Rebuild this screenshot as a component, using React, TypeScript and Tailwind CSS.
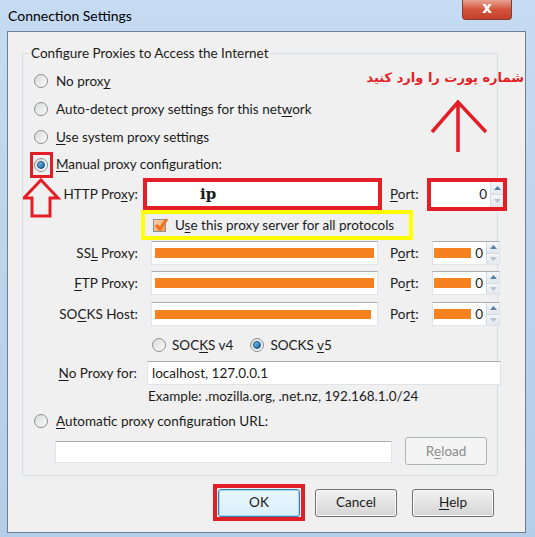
import React from "react"

function U({ children }: { children: React.ReactNode }) {
  return <span className="underline underline-offset-2">{children}</span>
}

function Radio({ checked = false }: { checked?: boolean }) {
  return (
    <span className="flex h-[14px] w-[14px] shrink-0 items-center justify-center rounded-full border border-[#8e8f8f] bg-gradient-to-br from-[#d9dadb] to-[#fbfbfb]">
      {checked && (
        <span className="h-[8px] w-[8px] rounded-full border border-[#0e4d80] bg-gradient-to-br from-[#7ec6f0] to-[#1a5e96]" />
      )}
    </span>
  )
}

function Spinner() {
  return (
    <div className="flex h-full w-[13px] shrink-0 flex-col border-l border-[#d6dbe2]">
      <div className="flex flex-1 items-center justify-center border-b border-[#d6dbe2] bg-gradient-to-b from-[#f4f6f8] to-[#e3e8ee]">
        <svg width="7" height="4" viewBox="0 0 7 4">
          <path d="M0 4 L3.5 0 L7 4 Z" fill="#5a7fa6" />
        </svg>
      </div>
      <div className="flex flex-1 items-center justify-center bg-gradient-to-b from-[#f4f6f8] to-[#e3e8ee]">
        <svg width="7" height="4" viewBox="0 0 7 4">
          <path d="M0 0 L3.5 4 L7 0 Z" fill="#b9c3ce" />
        </svg>
      </div>
    </div>
  )
}

function TextBox({ className = "", children }: { className?: string; children?: React.ReactNode }) {
  return (
    <div
      className={
        "flex shrink-0 items-center border border-[#e2e3ea] border-t-[#abadb3] bg-white " + className
      }
    >
      {children}
    </div>
  )
}

function PortBox() {
  return (
    <TextBox className="h-[24px] w-[68px]">
      <div className="flex flex-1 items-center justify-end pr-[3px]">
        <span className="mr-[4px] h-[10px] w-[37px] bg-[#f5821f]" />
        <span>0</span>
      </div>
      <Spinner />
    </TextBox>
  )
}

function Btn({ children, focused = false, disabled = false }: { children: React.ReactNode; focused?: boolean; disabled?: boolean }) {
  return (
    <div
      className={
        "flex h-[28px] w-[82px] shrink-0 items-center justify-center rounded-[3px] border " +
        (focused
          ? "border-[#3c7fb1] bg-gradient-to-b from-[#eaf6fd] to-[#d9f0fc] shadow-[inset_0_0_0_1px_#9fdcf8]"
          : disabled
          ? "border-[#adb2b5] bg-[#f4f4f4] text-[#8d8d8d]"
          : "border-[#707070] bg-gradient-to-b from-[#f2f2f2] to-[#d5d5d5] shadow-[inset_0_0_0_1px_#fcfcfc]")
      }
    >
      {children}
    </div>
  )
}

export default function App() {
  return (
    <div className="flex h-[537px] w-[535px] flex-col overflow-hidden bg-gradient-to-b from-[#c5dbf1] to-[#b4cde8] font-['Segoe_UI',Lato,sans-serif] text-[13.5px] text-[#1b1b1b]">
      {/* title bar */}
      <div className="flex h-[31px] shrink-0 items-start">
        <span className="pl-[8px] pt-[5px] text-[14px] text-black">Connection Settings</span>
        <div className="ml-auto mr-[23px] flex h-[20px] w-[50px] items-center justify-center rounded-b-[4px] border border-t-0 border-[#8b3a2e] bg-gradient-to-b from-[#e8a190] via-[#d2533b] to-[#c4402a]">
          <span className="pb-[2px] font-['DejaVu_Sans',sans-serif] text-[15px] font-bold leading-none text-white">x</span>
        </div>
      </div>

      <div className="flex flex-1 pb-[4px] pl-[7px] pr-[9px]">
        <div className="relative flex flex-1 flex-col border border-[#6d7f91] bg-[#f0f0f0]">
          {/* group box */}
          <div className="relative ml-[14px] mt-[21px] flex h-[423px] w-[476px] flex-col rounded-[3px] border border-[#d5dfe5] pt-[13px]">
            <span className="absolute -top-[10px] left-[6px] bg-[#f0f0f0] px-[2px] leading-[18px]">
              Configure Proxies to Access the Internet
            </span>

            <div className="flex h-[28px] items-center gap-[8px] pl-[11px]">
              <Radio />
              <span>
                No prox<U>y</U>
              </span>
            </div>
            <div className="flex h-[28px] items-center gap-[8px] pl-[11px]">
              <Radio />
              <span>
                Auto-detect proxy settings for this net<U>w</U>ork
              </span>
            </div>
            <div className="flex h-[28px] items-center gap-[8px] pl-[11px]">
              <Radio />
              <span>
                <U>U</U>se system proxy settings
              </span>
            </div>
            <div className="flex h-[27px] items-center gap-[8px] pl-[11px]">
              <Radio checked />
              <span>
                <U>M</U>anual proxy configuration:
              </span>
            </div>

            {/* HTTP */}
            <div className="flex h-[32px] items-center">
              <span className="w-[115px] shrink-0 text-right">
                HTTP Pro<U>x</U>y:
              </span>
              <div className="ml-[5px] flex h-[32px] w-[239px] shrink-0 items-center border-[4px] border-[#e41e26] bg-white pl-[53px]">
                <span className="font-['DejaVu_Serif',serif] text-[15px] font-bold">ip</span>
              </div>
              <span className="ml-[8px] w-[37px] shrink-0">
                <U>P</U>ort:
              </span>
              <div className="flex h-[33px] w-[80px] shrink-0 items-center border-[4px] border-[#e41e26] bg-white">
                <div className="flex h-full flex-1 items-center justify-end pr-[3px]">0</div>
                <Spinner />
              </div>
            </div>

            {/* checkbox */}
            <div className="flex h-[30px]">
              <div className="ml-[118px] flex h-[30px] w-[272px] shrink-0 items-center border-[4px] border-[#ffff00] pl-[8px]">
                <span className="relative flex h-[13px] w-[13px] shrink-0 items-center justify-center border border-[#8e8f8f] bg-gradient-to-br from-[#f6d2b4] to-[#f29a4e]">
                  <svg width="15" height="13" viewBox="0 0 15 13" className="absolute -top-[2px] left-0">
                    <path d="M2 7 L6 11 L13 1" fill="none" stroke="#f0701c" strokeWidth="3" />
                  </svg>
                </span>
                <span className="ml-[9px] whitespace-nowrap">
                  U<U>s</U>e this proxy server for all protocols
                </span>
              </div>
            </div>

            {/* SSL */}
            <div className="mt-[1px] flex h-[24px] items-center">
              <span className="w-[115px] shrink-0 text-right">
                SS<U>L</U> Proxy:
              </span>
              <TextBox className="ml-[13px] h-[24px] w-[227px] px-[3px]">
                <span className="h-[10px] w-full bg-[#f5821f]" />
              </TextBox>
              <span className="ml-[12px] w-[42px] shrink-0">
                P<U>o</U>rt:
              </span>
              <PortBox />
            </div>
            {/* FTP */}
            <div className="mt-[6px] flex h-[24px] items-center">
              <span className="w-[115px] shrink-0 text-right">
                <U>F</U>TP Proxy:
              </span>
              <TextBox className="ml-[13px] h-[24px] w-[227px] px-[3px]">
                <span className="h-[10px] w-full bg-[#f5821f]" />
              </TextBox>
              <span className="ml-[12px] w-[42px] shrink-0">
                Po<U>r</U>t:
              </span>
              <PortBox />
            </div>
            {/* SOCKS */}
            <div className="mt-[7px] flex h-[24px] items-center">
              <span className="w-[115px] shrink-0 text-right">
                SO<U>C</U>KS Host:
              </span>
              <TextBox className="ml-[13px] h-[24px] w-[227px] px-[3px]">
                <span className="h-[9px] w-[216px] bg-[#f5821f]" />
              </TextBox>
              <span className="ml-[12px] w-[42px] shrink-0">
                Por<U>t</U>:
              </span>
              <PortBox />
            </div>

            {/* socks version */}
            <div className="mt-[8px] flex h-[22px] items-center pl-[129px]">
              <Radio />
              <span className="ml-[6px]">
                SOC<U>K</U>S v4
              </span>
              <span className="ml-[17px]">
                <Radio checked />
              </span>
              <span className="ml-[6px]">
                SOCKS <U>v</U>5
              </span>
            </div>

            {/* no proxy for */}
            <div className="mt-[5px] flex h-[24px] items-center">
              <span className="w-[114px] shrink-0 text-right">
                <U>N</U>o Proxy for:
              </span>
              <TextBox className="ml-[10px] h-[24px] w-[354px] px-[4px]">localhost, 127.0.0.1</TextBox>
            </div>
            <div className="mt-[1px] flex h-[20px] items-center pl-[125px]">
              Example: .mozilla.org, .net.nz, 192.168.1.0/24
            </div>

            <div className="mt-[4px] flex h-[22px] items-center gap-[8px] pl-[11px]">
              <Radio />
              <span>
                <U>A</U>utomatic proxy configuration URL:
              </span>
            </div>
            <div className="mt-[5px] flex h-[27px] items-start pl-[32px]">
              <TextBox className="mt-[4px] h-[22px] w-[337px]" />
              <div className="ml-[13px]">
                <Btn disabled>
                  R<U>e</U>load
                </Btn>
              </div>
            </div>

            {/* annotations */}
            <span
              dir="rtl"
              className="absolute -right-[27px] top-[14px] whitespace-nowrap font-['DejaVu_Sans',sans-serif] text-[13px] font-bold text-[#e41e26]"
            >
              شماره پورت را وارد کنید
            </span>
            <svg className="absolute left-[405px] top-[44px]" width="64" height="56" viewBox="0 0 64 56">
              <path d="M4 34 L30 4 L58 34 M30 4 L30 54" fill="none" stroke="#e41e26" strokeWidth="3.5" />
            </svg>
            <div className="absolute left-[7px] top-[98px] h-[26px] w-[23px] border-[3px] border-[#e41e26]" />
            <svg className="absolute left-0 top-[124px]" width="38" height="40" viewBox="0 0 38 40">
              <path d="M18 2 L35 20 L27 20 L27 38 L9 38 L9 20 L1 20 Z" fill="none" stroke="#e41e26" strokeWidth="3" strokeLinejoin="miter" />
            </svg>
          </div>

          {/* buttons */}
          <div className="ml-[205px] mt-[8px] flex h-[37px] items-center">
            <div className="flex h-[37px] w-[92px] items-center justify-center border-[4px] border-[#e41e26]">
              <Btn focused>OK</Btn>
            </div>
            <div className="ml-[10px]">
              <Btn>Cancel</Btn>
            </div>
            <div className="ml-[15px]">
              <Btn>
                <U>H</U>elp
              </Btn>
            </div>
          </div>
        </div>
      </div>
    </div>
  )
}
